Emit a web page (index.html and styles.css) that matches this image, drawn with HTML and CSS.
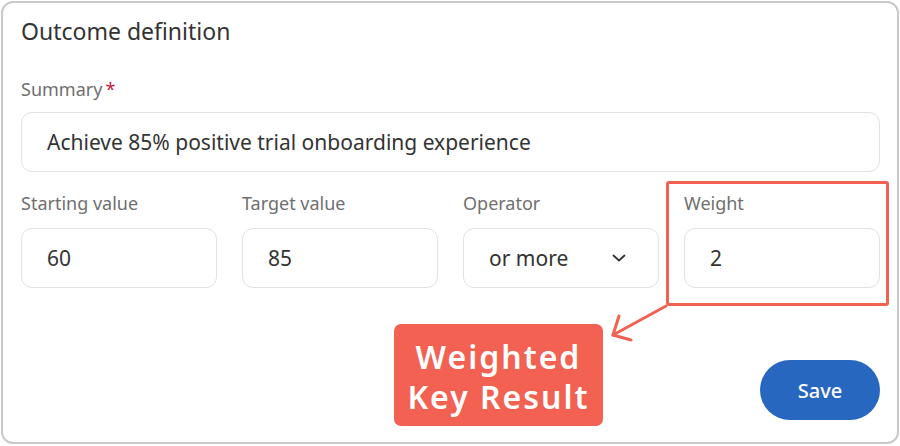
FILE: index.html
```html
<!DOCTYPE html>
<html>
<head>
<meta charset="utf-8">
<link rel="stylesheet" href="styles.css">
</head>
<body>
<div class="card">
  <h1 class="title">Outcome definition</h1>
  <div class="field">
    <label class="label">Summary<span class="req">*</span></label>
    <div class="input">Achieve 85% positive trial onboarding experience</div>
  </div>
  <div class="row">
    <div class="field">
      <label class="label">Starting value</label>
      <div class="input">60</div>
    </div>
    <div class="field">
      <label class="label">Target value</label>
      <div class="input">85</div>
    </div>
    <div class="field">
      <label class="label">Operator</label>
      <div class="input select">
        <span>or more</span>
        <svg class="chev" width="14" height="8" viewBox="0 0 14 8"><path d="M1.5 1.5 L7 6.5 L12.5 1.5" fill="none" stroke="#333" stroke-width="1.8" stroke-linecap="round" stroke-linejoin="round"/></svg>
      </div>
    </div>
    <div class="field weight">
      <label class="label">Weight</label>
      <div class="input">2</div>
      <div class="highlight"></div>
    </div>
  </div>
  <div class="footer">
    <button class="save">Save</button>
  </div>
  <svg class="arrow" width="900" height="446" viewBox="0 0 900 446">
    <g fill="none" stroke="#f26152" stroke-width="3" stroke-linecap="round" stroke-linejoin="round">
      <path d="M666 306 L613 335"/>
      <path d="M619 316 L613 335 L631 340"/>
    </g>
  </svg>
  <div class="badge">Weighted<br>Key Result</div>
</div>
</body>
</html>
```
FILE: styles.css
```css
* { box-sizing: border-box; }
html, body { margin: 0; padding: 0; background: #ffffff; }
body { width: 900px; height: 446px; overflow: hidden; font-family: "Noto Sans", "Open Sans", sans-serif; }
.card {
  position: relative;
  margin: 1px;
  width: 898px;
  height: 443px;
  border: 2px solid #c9c9c9;
  border-radius: 12px;
  padding: 12px 17px 0 18px;
}
.title {
  margin: 0;
  font-size: 23px;
  font-weight: 400;
  color: #333;
  line-height: 32px;
}
.field { display: flex; flex-direction: column; position: relative; }
.label {
  font-size: 18px;
  color: #6f6f6f;
  line-height: 24px;
  margin-top: 30px;
  margin-bottom: 11px;
}
.req { color: #c4173f; margin-left: 3px; }
.input {
  height: 60px;
  border: 1px solid #dfe3e8;
  border-radius: 11px;
  display: flex;
  align-items: center;
  padding: 0 25px;
  font-size: 21px;
  color: #333;
}
.row {
  display: grid;
  grid-template-columns: repeat(4, 196px);
  column-gap: 25px;
  margin-top: -12px;
}
.row .label { margin-top: 31px; margin-bottom: 13px; }
.select { justify-content: space-between; padding-right: 32px; }
.chev { display: block; }
.highlight {
  position: absolute;
  left: -18px;
  top: 21px;
  width: 223px;
  height: 125px;
  border: 3px solid #f26152;
  border-radius: 3px;
}
.footer { display: flex; justify-content: flex-end; margin-top: 72px; }
.save {
  width: 120px;
  height: 60px;
  border: none;
  border-radius: 30px;
  background: #2767c0;
  color: #fff;
  font-family: "Noto Sans", "Open Sans", sans-serif;
  font-size: 20px;
  font-weight: 500;
}
.arrow { position: absolute; left: -3px; top: -3px; pointer-events: none; }
.badge {
  position: absolute;
  left: 391px;
  top: 321px;
  width: 209px;
  height: 102px;
  padding-top: 4px;
  background: #f26152;
  border-radius: 7px;
  color: #fff;
  font-family: "Noto Sans", "Open Sans", sans-serif;
  font-weight: 600;
  font-size: 32px;
  letter-spacing: 2px;
  line-height: 40px;
  text-align: center;
  display: flex;
  align-items: center;
  justify-content: center;
}
```
